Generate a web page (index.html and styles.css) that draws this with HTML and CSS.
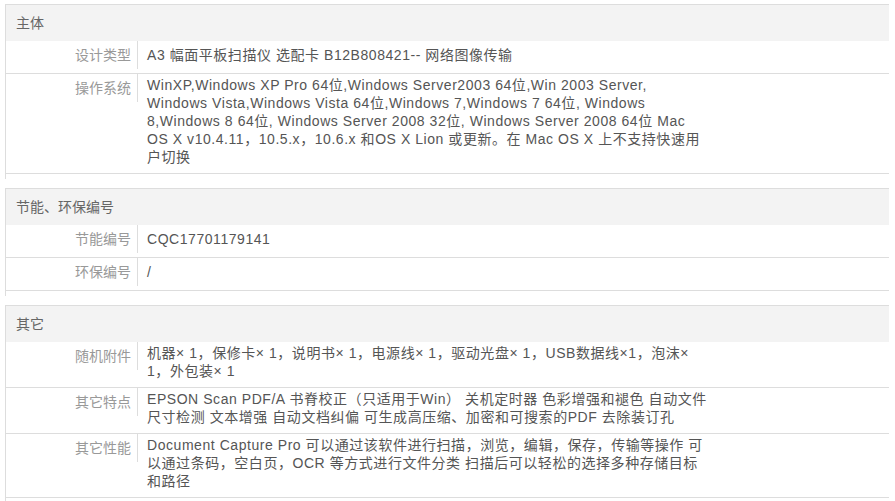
FILE: index.html
```html
<!DOCTYPE html>
<html lang="zh-CN">
<head>
<meta charset="utf-8">
<title>规格参数</title>
<link rel="stylesheet" href="styles.css">
</head>
<body>
<div class="specs">
  <section class="group">
    <h3 class="group-title">主体</h3>
    <dl class="row">
      <dt>设计类型</dt>
      <dd>A3 幅面平板扫描仪 选配卡 B12B808421-- 网络图像传输</dd>
    </dl>
    <dl class="row multi">
      <dt>操作系统</dt>
      <dd>WinXP,Windows XP Pro 64位,Windows Server2003 64位,Win 2003 Server, Windows Vista,Windows Vista 64位,Windows 7,Windows 7 64位, Windows 8,Windows 8 64位, Windows Server 2008 32位, Windows Server 2008 64位 Mac OS X v10.4.11，10.5.x，10.6.x 和OS X Lion 或更新。在 Mac OS X 上不支持快速用户切换</dd>
    </dl>
  </section>
  <section class="group">
    <h3 class="group-title">节能、环保编号</h3>
    <dl class="row">
      <dt>节能编号</dt>
      <dd>CQC17701179141</dd>
    </dl>
    <dl class="row">
      <dt>环保编号</dt>
      <dd>/</dd>
    </dl>
  </section>
  <section class="group">
    <h3 class="group-title">其它</h3>
    <dl class="row multi">
      <dt>随机附件</dt>
      <dd>机器× 1，保修卡× 1，说明书× 1，电源线× 1，驱动光盘× 1，USB数据线×1，泡沫× 1，外包装× 1</dd>
    </dl>
    <dl class="row multi">
      <dt>其它特点</dt>
      <dd>EPSON Scan PDF/A 书脊校正（只适用于Win） 关机定时器 色彩增强和褪色 自动文件尺寸检测 文本增强 自动文档纠偏 可生成高压缩、加密和可搜索的PDF 去除装订孔</dd>
    </dl>
    <dl class="row multi">
      <dt>其它性能</dt>
      <dd>Document Capture Pro 可以通过该软件进行扫描，浏览，编辑，保存，传输等操作 可以通过条码，空白页，OCR 等方式进行文件分类 扫描后可以轻松的选择多种存储目标和路径</dd>
    </dl>
  </section>
</div>
</body>
</html>
```

FILE: styles.css
```css
* {
  box-sizing: content-box;
}

html, body {
  margin: 0;
  padding: 0;
  background: #fff;
}

body {
  font-family: "Liberation Sans", Arial, "Noto Sans CJK SC", sans-serif;
  font-size: 14px;
  color: #555;
}

.specs {
  padding: 4px 6px 0 5px;
}

.group {
  border-top: 1px solid #ddd;
  border-left: 1px solid #ddd;
  padding-bottom: 5px;
  margin-bottom: 9px;
}

.group-title {
  margin: 0;
  height: 36px;
  line-height: 36px;
  padding-left: 10px;
  background: #f3f3f3;
  font-size: 14px;
  font-weight: normal;
  color: #666;
}

.row {
  display: flex;
  align-items: flex-start;
  margin: 0;
  border-bottom: 1px solid #ddd;
}

.row dt {
  flex: none;
  width: 125px;
  padding: 5px 6px 5px 0;
  margin-bottom: 4px;
  line-height: 18px;
  text-align: right;
  color: #999;
  border-right: 1px solid #ddd;
}

.row dd {
  margin: 0;
  width: 563px;
  padding: 5px 0 0 9px;
  line-height: 18px;
  letter-spacing: 0.55px;
  color: #555;
}

.row.multi dd {
  padding-top: 2px;
  padding-bottom: 7px;
}
```
